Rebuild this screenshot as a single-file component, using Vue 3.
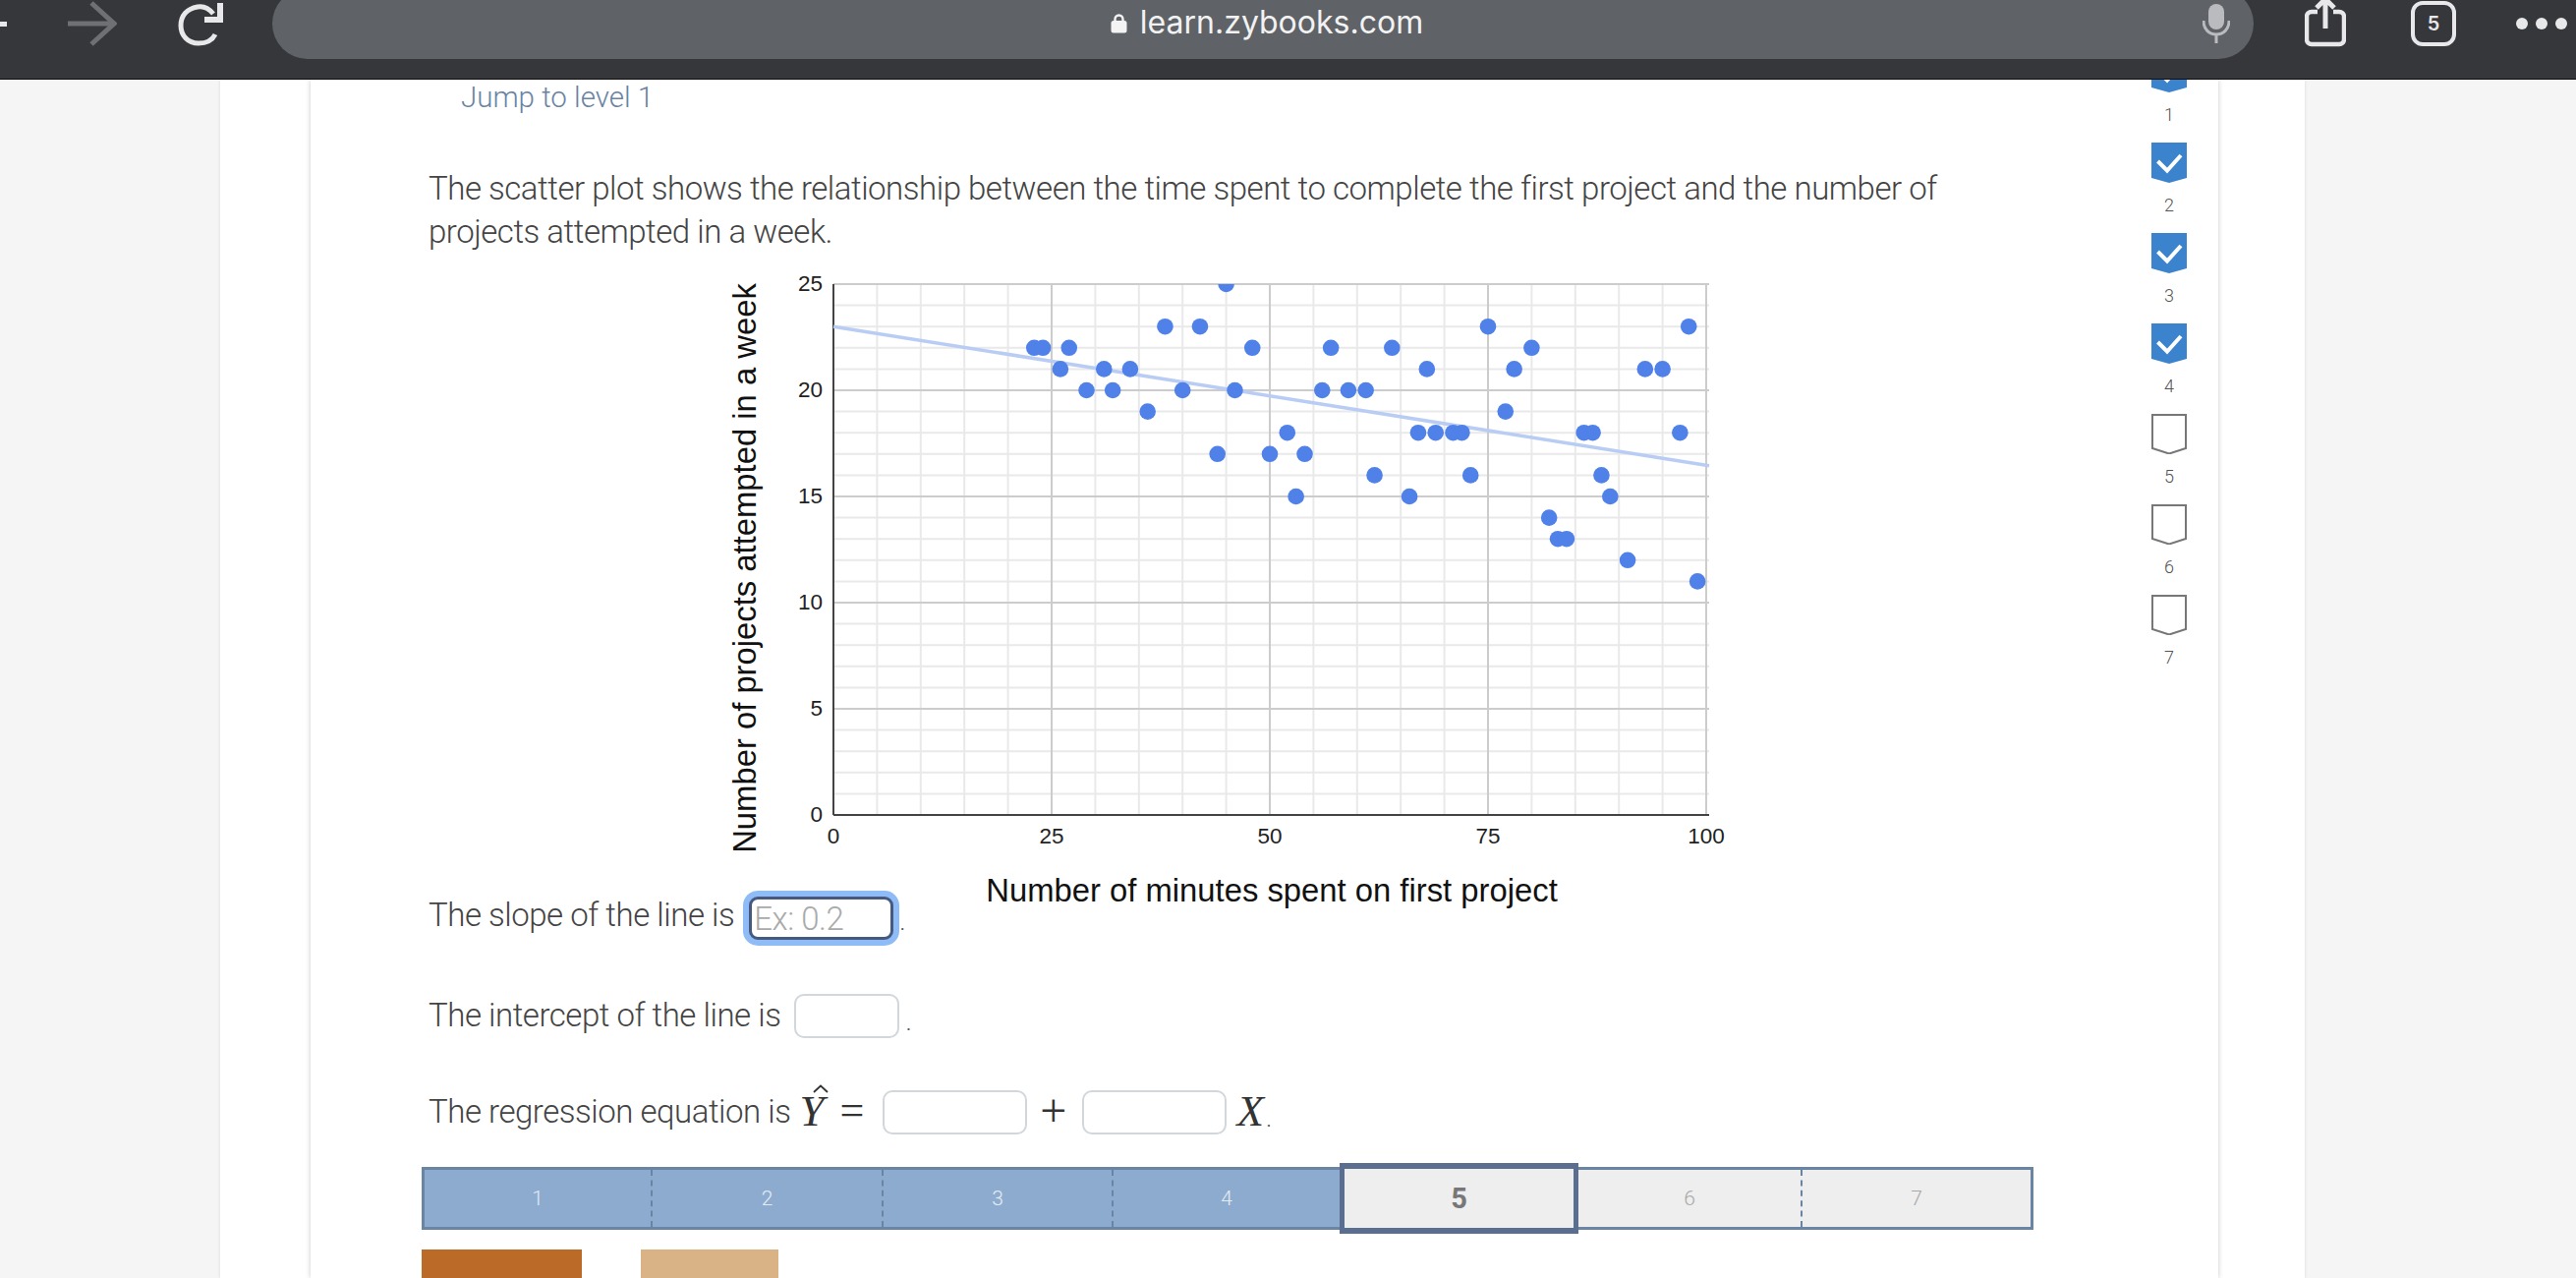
<script setup>
import { computed } from "vue";

const plot = { left: 112, top: 19, unitX: 8.88, unitY: 21.6 };
const sx = (v) => plot.left + v * plot.unitX;
const sy = (v) => plot.top + (25 - v) * plot.unitY;

const points = [
  [23, 22], [24, 22], [27, 22], [26, 21], [29, 20], [31, 21], [32, 20], [34, 21], [36, 19],
  [38, 23], [40, 20], [42, 23], [45, 25], [48, 22], [46, 20], [57, 22], [64, 22], [68, 21],
  [75, 23], [80, 22], [78, 21], [93, 21], [95, 21], [98, 23], [56, 20], [59, 20], [61, 20],
  [77, 19], [52, 18], [67, 18], [69, 18], [71, 18], [72, 18], [86, 18], [87, 18], [97, 18],
  [44, 17], [50, 17], [54, 17], [62, 16], [73, 16], [88, 16], [53, 15], [66, 15], [89, 15],
  [82, 14], [83, 13], [84, 13], [91, 12], [99, 11],
];

const minorX = computed(() => [5, 10, 15, 20, 30, 35, 40, 45, 55, 60, 65, 70, 80, 85, 90, 95]);
const minorY = computed(() => {
  const out = [];
  for (let i = 1; i < 25; i++) if (i % 5 !== 0) out.push(i);
  return out;
});

const levels = [
  { n: 1, done: true }, { n: 2, done: true }, { n: 3, done: true }, { n: 4, done: true },
  { n: 5, done: false }, { n: 6, done: false }, { n: 7, done: false },
];

const steps = [
  { n: 1, cls: "done" }, { n: 2, cls: "done" }, { n: 3, cls: "done" }, { n: 4, cls: "done last" },
  { n: 5, cls: "current" }, { n: 6, cls: "todo" }, { n: 7, cls: "todo last" },
];
</script>

<template>
  <div class="screen">
    <header class="browser">
      <svg class="back" width="8" height="80"><rect x="0" y="22" width="7" height="5" fill="#e8e8ea" /></svg>
      <svg class="forward" width="50" height="50" viewBox="0 0 50 50">
        <path d="M0 24H46M24 3L47 24L24 45" fill="none" stroke="#6f7073" stroke-width="5" />
      </svg>
      <svg class="reload" width="46" height="50" viewBox="0 0 46 50">
        <path d="M36 14C31 8 25 6 20 7C9 9 3 16 3 26C3 36 10 44 21 44C29 44 35 41 38 35" fill="none" stroke="#e8e8ea" stroke-width="5" />
        <path d="M27 20H43V3" fill="none" stroke="#e8e8ea" stroke-width="6" />
      </svg>
      <div class="pill">
        <svg class="lock" width="17" height="21" viewBox="0 0 17 21">
          <path d="M4.5 9V6.5a4 4 0 0 1 8 0V9" fill="none" stroke="#f4f4f5" stroke-width="2.4" />
          <rect x="0.5" y="8" width="16" height="12.5" rx="2.5" fill="#f4f4f5" />
        </svg>
        <span class="url">learn.zybooks.com</span>
        <svg class="mic" width="28" height="40" viewBox="0 0 28 40">
          <rect x="6" y="0" width="16" height="26" rx="8" fill="#b9bbbf" />
          <path d="M1 17C1 26 7 31 14 31C21 31 27 26 27 17M14 31V40" fill="none" stroke="#b9bbbf" stroke-width="3" />
        </svg>
      </div>
      <svg class="share" width="42" height="48" viewBox="0 0 42 48">
        <path d="M13 12H7a5 5 0 0 0-5 5V40a5 5 0 0 0 5 5H35a5 5 0 0 0 5-5V17a5 5 0 0 0-5-5H29" fill="none" stroke="#e8e8ea" stroke-width="4.5" />
        <path d="M21 29V0M12 8L21 -1L30 8" fill="none" stroke="#e8e8ea" stroke-width="5" />
      </svg>
      <div class="tabs-count">5</div>
      <div class="dots"><i></i><i></i><i></i></div>
    </header>

    <div class="panel">
      <div class="card">
        <main class="main">
          <div class="jump">Jump to level 1</div>
          <p class="intro">
            The scatter plot shows the relationship between the time spent to complete the first project and the number of
            projects attempted in a week.
          </p>

          <svg class="chart" width="1024" height="660" viewBox="0 0 1024 660">
            <g stroke="#e9e9e9" stroke-width="2">
              <line v-for="v in minorX" :key="'x' + v" :x1="sx(v)" :x2="sx(v)" :y1="sy(25)" :y2="sy(0)" />
              <line v-for="v in minorY" :key="'y' + v" :x1="sx(0)" :x2="sx(100) + 3" :y1="sy(v)" :y2="sy(v)" />
            </g>
            <g stroke="#cccccc" stroke-width="2">
              <line v-for="v in [25, 50, 75, 100]" :key="'X' + v" :x1="sx(v)" :x2="sx(v)" :y1="sy(25)" :y2="sy(0)" />
              <line v-for="v in [5, 10, 15, 20, 25]" :key="'Y' + v" :x1="sx(0)" :x2="sx(100) + 3" :y1="sy(v)" :y2="sy(v)" />
            </g>
            <line :x1="sx(0)" :x2="sx(0)" :y1="sy(25)" :y2="sy(0)" stroke="#444" stroke-width="2" />
            <line :x1="sx(0)" :x2="sx(100) + 3" :y1="sy(0)" :y2="sy(0)" stroke="#444" stroke-width="2" />
            <line :x1="sx(0)" :y1="sy(23)" :x2="sx(100) + 3" :y2="sy(16.45)" stroke="#b9cdf4" stroke-width="3.5" />
            <clipPath id="plot-area"><rect x="100" y="19" width="910" height="560" /></clipPath>
            <g clip-path="url(#plot-area)">
              <circle v-for="(p, i) in points" :key="i" :cx="sx(p[0])" :cy="sy(p[1])" r="8.3" fill="#4f81e9" />
            </g>
            <g class="tick" text-anchor="end">
              <text v-for="v in [0, 5, 10, 15, 20, 25]" :key="v" x="101" :y="sy(v) + 7">{{ v }}</text>
            </g>
            <g class="tick" text-anchor="middle">
              <text v-for="v in [0, 25, 50, 75, 100]" :key="v" :x="sx(v)" y="588">{{ v }}</text>
            </g>
            <text class="axis-title" x="558" y="647" text-anchor="middle">Number of minutes spent on first project</text>
            <text class="axis-title" transform="translate(33 308) rotate(-90)" text-anchor="middle">Number of projects attempted in a week</text>
          </svg>

          <div class="row row-slope">
            <span>The slope of the line is</span>
            <input class="answer focused" placeholder="Ex: 0.2" />
            <span class="dot-end">.</span>
          </div>
          <div class="row row-intercept">
            <span>The intercept of the line is</span>
            <input class="answer small" />
            <span class="dot-end">.</span>
          </div>
          <div class="row row-equation">
            <span>The regression equation is</span>
            <span class="math y-hat">Y<svg class="hat" width="18" height="9" viewBox="0 0 18 9"><path d="M2 8L9 1.5L16 8" fill="none" stroke="#333" stroke-width="1.8" /></svg></span>
            <span class="math-op equals">=</span>
            <input class="answer wide" />
            <span class="math-op plus">+</span>
            <input class="answer wide" />
            <span class="math x-var">X</span>
            <span class="dot-end">.</span>
          </div>

          <div class="steps">
            <div v-for="s in steps" :key="s.n" class="step" :class="s.cls">{{ s.n }}</div>
          </div>

          <div class="buttons">
            <div class="btn-check"></div>
            <div class="btn-next"></div>
          </div>
        </main>

        <aside class="levels">
          <div v-for="l in levels" :key="l.n" class="level">
            <svg width="36" height="41" viewBox="0 0 36 41">
              <template v-if="l.done">
                <polygon points="0,0 36,0 36,36 18,41 0,36" fill="#3b83cc" />
                <path d="M6.5 19L16 28.5L30 13" fill="none" stroke="#fff" stroke-width="4" />
              </template>
              <polygon v-else points="1,1 35,1 35,35 18,40.5 1,35" fill="#fff" stroke="#777" stroke-width="2" />
            </svg>
            <span>{{ l.n }}</span>
          </div>
        </aside>
      </div>
    </div>
  </div>
</template>

<style>
html, body {
  margin: 0;
  overflow: hidden;
  background: #f5f5f5;
}
</style>

<style scoped>
.screen {
  width: 2621px;
  height: 1300px;
  overflow: hidden;
  background: #f5f5f5;
  font-family: Roboto, "Liberation Sans", sans-serif;
  font-weight: 300;
  color: #444;
}

/* browser chrome */
.browser {
  position: relative;
  z-index: 2;
  display: flex;
  align-items: flex-start;
  height: 80px;
  background: #36373b;
  border-bottom: 1px solid #0c0c0e;
}
.back { flex: none; }
.forward { flex: none; margin-left: 61px; margin-top: 0; }
.reload { flex: none; margin-left: 62px; }
.pill {
  position: relative;
  flex: none;
  box-sizing: border-box;
  display: flex;
  align-items: center;
  justify-content: center;
  gap: 13px;
  width: 2016px;
  height: 72px;
  margin: -12px 0 0 50px;
  padding: 0 0 0 8px;
  border-radius: 36px;
  background: #5f6266;
}
.lock { flex: none; margin-bottom: 2px; }
.url {
  margin-bottom: 4px;
  font-family: Inter, "Liberation Sans", sans-serif;
  font-size: 32px;
  font-weight: 400;
  color: #f2f2f3;
}
.mic {
  position: absolute;
  right: 24px;
  top: 16px;
}
.share { flex: none; margin-left: 52px; }
.tabs-count {
  flex: none;
  box-sizing: border-box;
  width: 46px;
  height: 46px;
  margin: 1px 0 0 66px;
  border: 4.5px solid #e8e8ea;
  border-radius: 12px;
  text-align: center;
  line-height: 38px;
  font-family: Inter, sans-serif;
  font-size: 20px;
  font-weight: 600;
  color: #e8e8ea;
}
.dots {
  flex: none;
  display: flex;
  gap: 8px;
  margin: 18px 0 0 61px;
}
.dots i {
  width: 12px;
  height: 12px;
  border-radius: 50%;
  background: #e8e8ea;
}

/* page */
.panel {
  margin: 0 276px 0 224px;
  padding: 0 88px 0 92px;
  height: 1219px;
  background: #fff;
  box-shadow: 0 0 3px rgba(0, 0, 0, 0.12);
}
.card {
  display: flex;
  height: 100%;
  background: #fff;
  box-shadow: 0 0 5px rgba(0, 0, 0, 0.22);
}
.main {
  flex: 1;
  min-width: 0;
  padding-left: 120px;
}
.jump {
  margin-left: 33px;
  line-height: 36px;
  font-size: 29.5px;
  color: #6a83a3;
}
.intro {
  width: 1580px;
  margin: 53px 0 0;
  font-size: 33px;
  letter-spacing: -0.47px;
  line-height: 44px;
}
.chart {
  display: block;
  margin: 12px 0 -22px 300px;
}
.tick {
  font-family: "Liberation Sans", Arial, sans-serif;
  font-size: 22.5px;
  font-weight: 400;
  fill: #222;
}
.axis-title {
  font-family: "Liberation Sans", Arial, sans-serif;
  font-size: 32.8px;
  font-weight: 400;
  fill: #111;
}

/* answer rows */
.row {
  position: relative;
  display: flex;
  align-items: center;
  height: 44px;
  font-size: 33px;
  letter-spacing: -0.47px;
  white-space: nowrap;
}
.row-intercept { margin-top: 58px; }
.row-equation { margin-top: 54px; }
.answer {
  flex: none;
  box-sizing: border-box;
  height: 45px;
  padding: 0 2px;
  border: 2.5px solid #d2d7db;
  border-radius: 10px;
  background: #fff;
  outline: none;
  font-family: Roboto, sans-serif;
  font-size: 33px;
  letter-spacing: -0.47px;
  font-weight: 300;
  color: #333;
}
.answer::placeholder { color: #aaa; opacity: 1; }
.row-slope .answer, .row-intercept .answer, .row-equation .answer { margin-top: 3px; }
.focused {
  width: 147px;
  height: 44px;
  margin-left: 15px;
  margin-top: 8px !important;
  border: 3px solid #465a80;
  border-radius: 9px;
  box-shadow: 0 0 0 6px #8fbcf7;
}
.small { width: 107px; margin-left: 14px; }
.wide { width: 147px; }
.dot-end {
  align-self: flex-end;
  margin-left: 6px;
  font-size: 26px;
  line-height: 30px;
  color: #555;
}
.math {
  font-family: "Liberation Serif", serif;
  font-style: italic;
  font-weight: 400;
  font-size: 45px;
  letter-spacing: 0;
  line-height: 44px;
  color: #333;
}
.y-hat {
  position: relative;
  margin-left: 9px;
}
.hat {
  position: absolute;
  left: 12px;
  top: -5px;
}
.math-op {
  font-family: "Liberation Serif", serif;
  font-size: 44px;
  font-weight: 400;
  letter-spacing: 0;
  line-height: 44px;
  color: #333;
}
.equals { margin: 0 19px 0 16px; }
.plus { margin: 0 16px 0 13px; font-size: 48px; }
.x-var { margin-left: 10px; }
.row-equation .dot-end { margin-left: 2px; }

/* level bar */
.steps {
  box-sizing: border-box;
  display: grid;
  grid-template-columns: 232px 235px 234px 230px 243px 228px 232px;
  width: 1640px;
  height: 64px;
  margin: 35px 0 0 -7px;
  border: 3px solid #6a84a4;
  background: #eee;
}
.step {
  display: flex;
  align-items: center;
  justify-content: center;
  font-size: 21px;
  font-weight: 300;
}
.step.done {
  background: #8dabce;
  color: #e3ebf4;
  border-right: 2px dashed #6a84a4;
}
.step.todo {
  color: #a8a8a8;
  border-right: 2px dashed #6a84a4;
}
.step.last { border-right: 0; }
.step.current {
  margin: -7px 0;
  border-style: solid;
  border-color: #5a6e8f;
  border-width: 6px 5px;
  background: #eee;
  font-size: 29px;
  font-weight: 700;
  color: #777;
}

.buttons {
  display: flex;
  gap: 60px;
  margin: 20px 0 0 -7px;
}
.btn-check {
  width: 163px;
  height: 60px;
  background: #bb6a28;
}
.btn-next {
  width: 140px;
  height: 60px;
  background: #d9b286;
}

/* level list */
.levels {
  flex: none;
  width: 36px;
  margin: -28px 32px 0 0;
}
.level {
  display: flex;
  flex-direction: column;
  align-items: center;
  height: 92px;
}
.level span {
  margin-top: 13px;
  line-height: 20px;
  font-size: 18px;
  color: #555;
}
</style>
